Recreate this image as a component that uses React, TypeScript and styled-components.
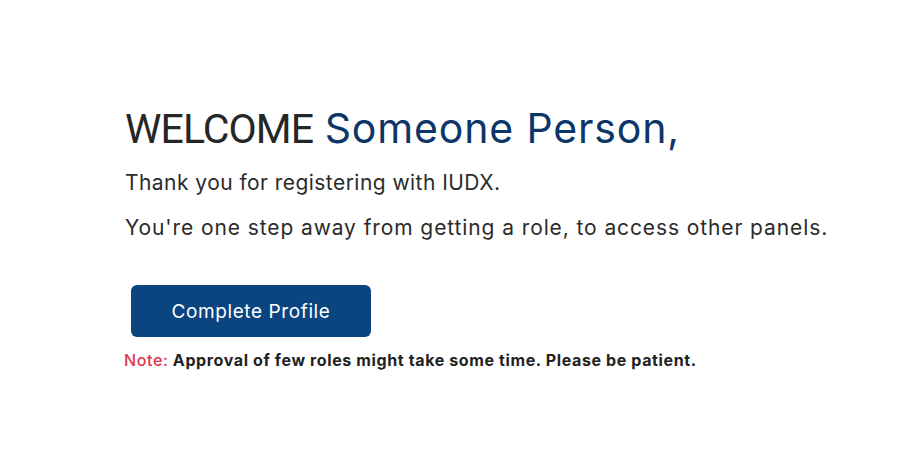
import React from "react";
import styled, { createGlobalStyle } from "styled-components";

const GlobalStyle = createGlobalStyle`
  html, body {
    margin: 0;
    padding: 0;
    background: #ffffff;
  }
  body {
    font-family: Inter, "Liberation Sans", Arial, sans-serif;
    color: #2b2b2b;
  }
`;

const Page = styled.div`
  width: 911px;
  height: 469px;
  box-sizing: border-box;
  padding: 103px 0 0 125px;
  display: flex;
  flex-direction: column;
  align-items: flex-start;
`;

const Title = styled.h1`
  margin: 0;
  font-size: 41px;
  font-weight: 400;
  line-height: 50px;
  white-space: nowrap;
`;

const Greeting = styled.span`
  font-family: Roboto, Inter, sans-serif;
  color: #262626;
  letter-spacing: -0.9px;
`;

const Name = styled.span`
  color: #0c3568;
  letter-spacing: 0.85px;
`;

const Line = styled.p<{ $gap: number; $tracking: number }>`
  margin: ${({ $gap }) => $gap}px 0 0;
  font-size: 21px;
  line-height: 26px;
  color: #2b2b2b;
  letter-spacing: ${({ $tracking }) => $tracking}px;
  white-space: nowrap;
`;

const ProfileButton = styled.button`
  margin: 44px 0 0 6px;
  width: 240px;
  height: 52px;
  border: none;
  border-radius: 6px;
  background: #0b4580;
  color: #ffffff;
  font-family: inherit;
  font-size: 19px;
  letter-spacing: 0.6px;
  cursor: pointer;
`;

const Note = styled.p`
  margin: 13px 0 0 -1px;
  font-size: 16px;
  line-height: 20px;
  font-weight: 700;
  letter-spacing: 0.62px;
  color: #222222;
  white-space: nowrap;
`;

const NoteLabel = styled.span`
  color: #e0364c;
  font-weight: 500;
`;

export default function App() {
  return (
    <>
      <GlobalStyle />
      <Page>
        <Title>
          <Greeting>WELCOME</Greeting> <Name>Someone Person,</Name>
        </Title>
        <Line $gap={16} $tracking={0.45}>
          Thank you for registering with IUDX.
        </Line>
        <Line $gap={19} $tracking={0.9}>
          You're one step away from getting a role, to access other panels.
        </Line>
        <ProfileButton>Complete Profile</ProfileButton>
        <Note>
          <NoteLabel>Note:</NoteLabel> Approval of few roles might take some
          time. Please be patient.
        </Note>
      </Page>
    </>
  );
}
